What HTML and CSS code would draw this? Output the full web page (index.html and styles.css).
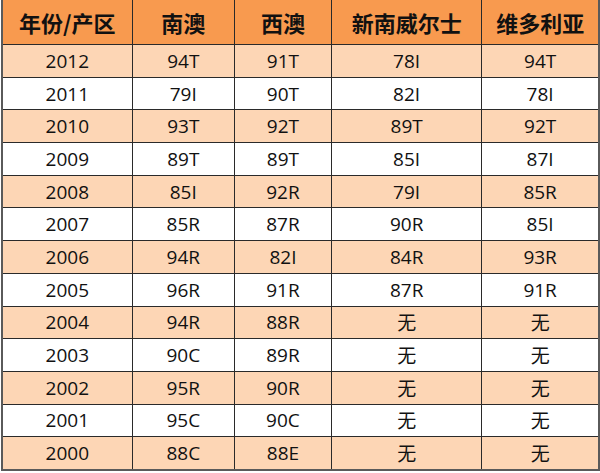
FILE: index.html
```html
<!DOCTYPE html>
<html lang="zh">
<head>
<meta charset="utf-8">
<link rel="stylesheet" href="styles.css">
</head>
<body>
<table class="vt">
<colgroup>
<col class="c1"><col class="c2"><col class="c3"><col class="c4"><col class="c5">
</colgroup>
<thead>
<tr><th>年份/产区</th><th>南澳</th><th>西澳</th><th>新南威尔士</th><th>维多利亚</th></tr>
</thead>
<tbody>
<tr class="odd"><td>2012</td><td>94T</td><td>91T</td><td>78I</td><td>94T</td></tr>
<tr><td>2011</td><td>79I</td><td>90T</td><td>82I</td><td>78I</td></tr>
<tr class="odd"><td>2010</td><td>93T</td><td>92T</td><td>89T</td><td>92T</td></tr>
<tr><td>2009</td><td>89T</td><td>89T</td><td>85I</td><td>87I</td></tr>
<tr class="odd"><td>2008</td><td>85I</td><td>92R</td><td>79I</td><td>85R</td></tr>
<tr><td>2007</td><td>85R</td><td>87R</td><td>90R</td><td>85I</td></tr>
<tr class="odd"><td>2006</td><td>94R</td><td>82I</td><td>84R</td><td>93R</td></tr>
<tr><td>2005</td><td>96R</td><td>91R</td><td>87R</td><td>91R</td></tr>
<tr class="odd"><td>2004</td><td>94R</td><td>88R</td><td>无</td><td>无</td></tr>
<tr><td>2003</td><td>90C</td><td>89R</td><td>无</td><td>无</td></tr>
<tr class="odd"><td>2002</td><td>95R</td><td>90R</td><td>无</td><td>无</td></tr>
<tr><td>2001</td><td>95C</td><td>90C</td><td>无</td><td>无</td></tr>
<tr class="odd"><td>2000</td><td>88C</td><td>88E</td><td>无</td><td>无</td></tr>
</tbody>
</table>
</body>
</html>
```
FILE: styles.css
```css
html, body {
  margin: 0;
  padding: 0;
  background: #ffffff;
}
.vt {
  border-collapse: collapse;
  table-layout: fixed;
  width: 599px;
  margin-left: 1px;
  font-family: "Open Sans", "Noto Sans CJK SC", sans-serif;
  color: #111;
  border-left: 2px solid #5a5a5a;
  border-right: 2px solid #5a5a5a;
  border-bottom: 2px solid #5a5a5a;
}
.c1 { width: 130px; }
.c2 { width: 102px; }
.c3 { width: 97px; }
.c4 { width: 150px; }
.c5 { width: 117px; }
.vt th {
  height: 44px;
  padding: 0;
  background: #f89a4f;
  font-family: "Noto Sans CJK SC", sans-serif;
  font-weight: 700;
  font-size: 22px;
  color: #111;
  border: 1px solid #2a2a2a;
  border-top: none;
  text-align: center;
  vertical-align: middle;
}
.vt td {
  height: 31.7px;
  padding: 0;
  font-size: 19px;
  text-align: center;
  vertical-align: middle;
  border: 1px solid #2a2a2a;
}
.vt tr.odd td {
  background: #fdd6b5;
}
```
